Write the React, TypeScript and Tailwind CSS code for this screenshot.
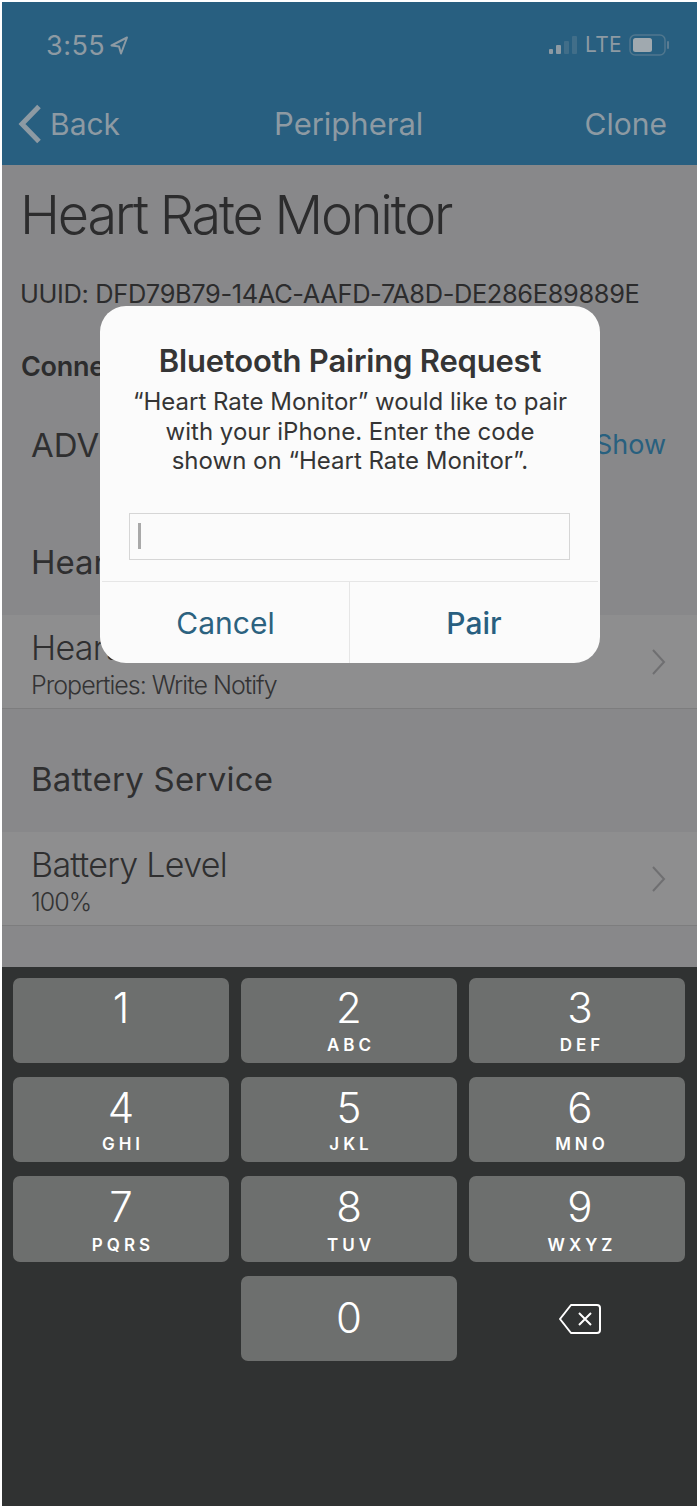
import React from "react";

const sans = { fontFamily: '"Inter","Liberation Sans",sans-serif' };

function Chevron() {
  return (
    <svg width="16" height="28" viewBox="0 0 16 28" fill="none" className="shrink-0">
      <path d="M2 2 L13 14 L2 26" stroke="#6f6f71" strokeWidth="2" />
    </svg>
  );
}

function Row({ title, sub }: { title: string; sub: string }) {
  return (
    <div className="flex items-center justify-between h-[94px] bg-[#8e8e8f] border-b border-[#7d7d7e] pl-[29px] pr-[30px]">
      <div className="flex flex-col mt-[6px]">
        <span className="text-[34px] leading-[38px] font-light tracking-[-0.7px] text-[#2f2f30] whitespace-nowrap">{title}</span>
        <span className="text-[25px] leading-[30px] mt-[3px] font-light tracking-[-1px] text-[#333334] whitespace-nowrap">{sub}</span>
      </div>
      <Chevron />
    </div>
  );
}

function Key({ n, l, h, top, gap, side }: { n: string; l?: string; h: string; top: string; gap?: string; side?: string }) {
  return (
    <div className={`flex flex-col items-center rounded-[7px] bg-[#6d6f6e] text-white ${h} ${top} ${side ?? ""}`}>
      <span className="text-[42px] leading-[50px] font-light">{n}</span>
      {l && <span className={`text-[17px] leading-[20px] font-semibold tracking-[4px] pl-[4px] ${gap ?? "mt-[1px]"}`}>{l}</span>}
    </div>
  );
}

export default function App() {
  return (
    <div className="relative w-[700px] h-[1510px] bg-white pt-[2px] pl-[2px] pr-[3px] pb-[4px] flex flex-col overflow-hidden" style={sans}>
      <header className="h-[163px] bg-[#285f80] shrink-0 flex flex-col text-[#8d9aa3]">
        <div className="flex items-center justify-between h-[86px] pl-[44px] pr-[27px]">
          <div className="flex items-center gap-[5px] mt-[1px]">
            <span className="text-[27px] leading-[32px] tracking-[0.5px]">3:55</span>
            <svg width="19" height="19" viewBox="0 0 19 19" fill="none">
              <path d="M17 1.5 L1.5 9.5 L9 10.5 L11 17.5 Z" stroke="#8d9aa3" strokeWidth="2" strokeLinejoin="round" />
            </svg>
          </div>
          <div className="flex items-center gap-[7px]">
            <svg width="29" height="20" viewBox="0 0 29 20" fill="#8d9aa3">
              <rect x="0" y="14" width="4" height="5" rx="1" />
              <rect x="7" y="10" width="5" height="9" rx="1" />
              <rect x="15" y="6" width="5" height="13" rx="1" opacity=".25" />
              <rect x="23" y="1" width="5" height="18" rx="1" opacity=".25" />
            </svg>
            <span className="text-[21px] leading-[24px] tracking-[0.3px]">LTE</span>
            <svg width="41" height="22" viewBox="0 0 41 22" fill="none">
              <rect x="1" y="1" width="35" height="20" rx="5" stroke="#8d9aa3" strokeOpacity=".4" strokeWidth="1.5" />
              <rect x="4" y="4" width="19" height="14" rx="2.5" fill="#a0a9af" />
              <rect x="38" y="7" width="2" height="8" rx="1" fill="#8d9aa3" opacity=".5" />
            </svg>
          </div>
        </div>
        <div className="relative flex items-center justify-between h-[75px] pb-[4px] pl-[16px] pr-[30px]">
          <div className="flex items-center gap-[8px]">
            <svg width="24" height="40" viewBox="0 0 24 40" fill="none">
              <path d="M21 2.5 L4 20 L21 37.5" stroke="#8d9aa3" strokeWidth="5" />
            </svg>
            <span className="text-[30px] leading-[36px]">Back</span>
          </div>
          <span className="absolute left-[272px] text-[31px] leading-[36px]">Peripheral</span>
          <span className="text-[30px] leading-[36px]">Clone</span>
        </div>
      </header>

      <main className="h-[802px] shrink-0 bg-[#88888a] flex flex-col">
        <div className="pl-[18px] pt-[14px] text-[#2c2c2d]">
          <h1 className="text-[54px] leading-[72px] font-light tracking-[-2.2px] whitespace-nowrap">Heart Rate Monitor</h1>
          <p className="text-[25.4px] leading-[30px] mt-[28px] tracking-[-0.35px] whitespace-nowrap">UUID: DFD79B79-14AC-AAFD-7A8D-DE286E89889E</p>
          <p className="text-[27px] leading-[32px] mt-[42px] pl-[1px] font-semibold tracking-[-0.3px]">Connected</p>
        </div>
        <div className="flex items-center justify-between pl-[29px] pr-[31px] mt-[42px] h-[40px]">
          <span className="text-[33px] leading-[40px] text-[#2f2f30] whitespace-nowrap">ADVERTISEMENT</span>
          <span className="text-[27px] leading-[32px] text-[#28607f]">Show</span>
        </div>
        <div className="pl-[29px] mt-[77px] h-[73px]">
          <span className="text-[33px] leading-[40px] text-[#2f2f30] whitespace-nowrap">Heart Rate</span>
        </div>
        <Row title="Heart Rate Measure" sub="Properties: Write Notify" />
        <div className="h-[123px] flex items-center pl-[29px] pt-[16px]">
          <span className="text-[33px] leading-[40px] tracking-[0.25px] text-[#2f2f30]">Battery Service</span>
        </div>
        <Row title="Battery Level" sub="100%" />
      </main>

      <section className="flex-1 bg-[#303232] pl-[11px] pr-[12px] pt-[11px]">
        <div className="grid grid-cols-3 gap-x-[12px] gap-y-[14px]">
          <Key n="1" h="h-[85px]" top="pt-[5px]" />
          <Key n="2" l="ABC" h="h-[85px]" top="pt-[5px]" gap="mt-[2px]" />
          <Key n="3" l="DEF" h="h-[85px]" top="pt-[5px]" gap="mt-[2px]" side="pl-[6px]" />
          <Key n="4" l="GHI" h="h-[85px]" top="pt-[6px]" />
          <Key n="5" l="JKL" h="h-[85px]" top="pt-[6px]" />
          <Key n="6" l="MNO" h="h-[85px]" top="pt-[6px]" side="pl-[6px]" />
          <Key n="7" l="PQRS" h="h-[86px]" top="pt-[6px]" gap="mt-[3px]" />
          <Key n="8" l="TUV" h="h-[86px]" top="pt-[6px]" gap="mt-[3px]" />
          <Key n="9" l="WXYZ" h="h-[86px]" top="pt-[6px]" gap="mt-[3px]" side="pl-[6px]" />
          <div />
          <div className="flex items-center justify-center rounded-[7px] bg-[#6d6f6e] text-white h-[85px]">
            <span className="text-[42px] leading-[50px] font-light mb-[2px]">0</span>
          </div>
          <div className="flex items-center justify-center h-[85px] pl-[6px]">
            <svg width="44" height="32" viewBox="0 0 44 32" fill="none" stroke="white" strokeWidth="2">
              <path d="M13 2 H39 a3 3 0 0 1 3 3 V27 a3 3 0 0 1 -3 3 H13 L2 16 Z" strokeLinejoin="round" />
              <path d="M21 10 L33 22 M33 10 L21 22" />
            </svg>
          </div>
        </div>
      </section>

      <div className="absolute left-[100px] top-[306px] w-[500px] h-[357px] rounded-[26px] bg-[#fbfbfb] flex flex-col text-[#353535]">
        <h2 className="mt-[37px] text-center text-[31px] leading-[36px] font-semibold tracking-[-0.2px]">Bluetooth Pairing Request</h2>
        <p className="mt-[8px] text-center text-[24px] leading-[29.5px] px-[20px]">
          “Heart Rate Monitor” would like to pair<br />with your iPhone. Enter the code<br />shown on “Heart Rate Monitor”.
        </p>
        <div className="mt-[37px] ml-[29px] mr-[30px] h-[47px] border border-[#d6d6d6] flex items-center pl-[8px] shrink-0">
          <div className="w-[3px] h-[26px] bg-[#a9a9a9]" />
        </div>
        <div className="mt-[21px] flex-1 grid grid-cols-2 border-t border-[#e6e6e6] mx-[2px]">
          <div className="flex items-center justify-center pt-[2px] border-r border-[#e6e6e6] text-[#2c627f] text-[30px]">Cancel</div>
          <div className="flex items-center justify-center pt-[2px] text-[#285f80] text-[30px] font-medium">Pair</div>
        </div>
      </div>
    </div>
  );
}
